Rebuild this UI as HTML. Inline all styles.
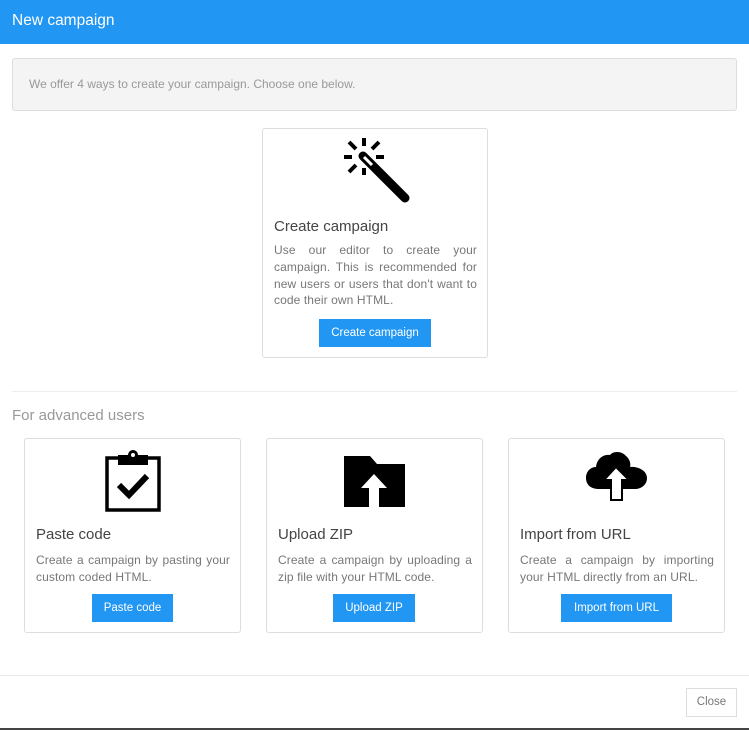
<!DOCTYPE html>
<html><head><style>
*{box-sizing:border-box;margin:0;padding:0}
body{width:749px;height:730px;position:relative;background:#fff;font-family:"Liberation Sans",sans-serif;overflow:hidden}
.hdr{position:absolute;left:0;top:0;width:749px;height:44px;background:#2196f3;color:#fff;font-size:15.5px;padding:12px 12px}
.info{position:absolute;left:12px;top:58px;width:725px;height:53px;background:#f4f4f4;border:1px solid #ddd;border-radius:3px;color:#999;font-size:12px;padding:18px 16px}
.card{position:absolute;border:1px solid #ddd;border-radius:3px;background:#fff}
.t{position:absolute;font-size:15px;color:#444}
.d{position:absolute;font-size:12px;letter-spacing:.1px;color:#777;line-height:16.8px;text-align:justify}
.b{position:absolute;background:#2196f3;color:#fff;font-size:11.5px;text-align:center;line-height:28px;height:28px}
svg{position:absolute}
</style></head><body>
<div class="hdr">New campaign</div>
<div class="info">We offer 4 ways to create your campaign. Choose one below.</div>

<div class="card" style="left:262px;top:128px;width:226px;height:230px">
<svg style="left:78px;top:8px" width="70" height="68" viewBox="0 0 70 68">
<g stroke="#000" stroke-width="4" stroke-linecap="butt">
<line x1="23" y1="1" x2="23" y2="9"/><line x1="3" y1="20" x2="11" y2="20"/><line x1="35" y1="20" x2="43" y2="20"/>
<line x1="8" y1="5" x2="15" y2="12"/><line x1="38" y1="5" x2="31" y2="12"/><line x1="8" y1="35" x2="15" y2="28"/>
<line x1="23" y1="31" x2="23" y2="38"/></g>
<line x1="22" y1="19" x2="64" y2="61" stroke="#000" stroke-width="9" stroke-linecap="round"/>
<line x1="23" y1="20" x2="31" y2="28" stroke="#fff" stroke-width="3"/>
</svg>
<div class="t" style="left:11px;top:89px">Create campaign</div>
<div class="d" style="left:11px;top:113px;width:203px">Use our editor to create your campaign. This is recommended for new users or users that don't want to code their own HTML.</div>
<div class="b" style="left:56px;top:190px;width:112px">Create campaign</div>
</div>

<div style="position:absolute;left:12px;top:391px;width:725px;height:1px;background:#eee"></div>
<div style="position:absolute;left:12px;top:407px;font-size:15px;color:#999">For advanced users</div>

<div class="card" style="left:24px;top:438px;width:217px;height:195px">
<svg style="left:80px;top:10px" width="56" height="64" viewBox="0 0 56 64">
<rect x="2" y="9" width="52" height="52" fill="none" stroke="#000" stroke-width="3.5"/>
<rect x="13" y="6" width="30" height="10" fill="#000"/>
<circle cx="28" cy="6" r="5" fill="#000"/><circle cx="28" cy="6" r="2" fill="#fff"/>
<polyline points="14,36 24,46 42,27" fill="none" stroke="#000" stroke-width="6"/>
</svg>
<div class="t" style="left:11px;top:87px">Paste code</div>
<div class="d" style="left:11px;top:113px;width:194px">Create a campaign by pasting your custom coded HTML.</div>
<div class="b" style="left:67px;top:155px;width:81px">Paste code</div>
</div>

<div class="card" style="left:266px;top:438px;width:217px;height:195px">
<svg style="left:76px;top:17px" width="64" height="52" viewBox="0 0 64 52">
<path d="M1 0H27L34 8H62V51H1Z" fill="#000"/>
<path d="M31 18L18 32H26V51H36V32H44Z" fill="#fff"/>
</svg>
<div class="t" style="left:11px;top:87px">Upload ZIP</div>
<div class="d" style="left:11px;top:113px;width:194px">Create a campaign by uploading a zip file with your HTML code.</div>
<div class="b" style="left:66px;top:155px;width:82px">Upload ZIP</div>
</div>

<div class="card" style="left:508px;top:438px;width:217px;height:195px">
<svg style="left:76px;top:12px" width="64" height="52" viewBox="0 0 64 52">
<path d="M14 38C5 38 1 33 1 27C1 20 6 16 11 16C12 7 19 3 25 4C28 0 36 0 40 4C45 8 46 13 45 16C52 15 62 19 62 27C62 34 56 38 50 38Z" fill="#000"/>
<path d="M31 16L19 29H26V49H37V29H44Z" fill="#fff" stroke="#000" stroke-width="2"/>
</svg>
<div class="t" style="left:11px;top:87px">Import from URL</div>
<div class="d" style="left:11px;top:113px;width:194px">Create a campaign by importing your HTML directly from an URL.</div>
<div class="b" style="left:52px;top:155px;width:111px">Import from URL</div>
</div>

<div style="position:absolute;left:0;top:675px;width:749px;height:1px;background:#e8e8e8"></div>
<div style="position:absolute;left:686px;top:688px;width:51px;height:29px;border:1px solid #ddd;color:#777;font-size:11.5px;text-align:center;line-height:27px">Close</div>
<div style="position:absolute;left:0;top:728px;width:749px;height:2px;background:#444"></div>
</body></html>
